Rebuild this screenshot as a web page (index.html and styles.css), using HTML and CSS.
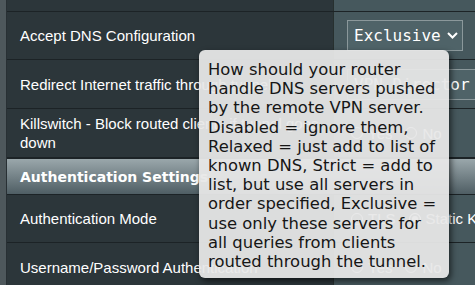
FILE: index.html
```html
<!DOCTYPE html>
<html lang="en">
<head>
    <meta charset="UTF-8">
    <title>VPN Client Settings</title>
    <link rel="stylesheet" href="styles.css">
</head>
<body>
    <div class="page">
        <div class="side"></div>
        <div class="table">
            <div class="row row-top">
                <div class="label"></div>
                <div class="value"></div>
            </div>

            <div class="row row-47">
                <div class="label">Accept DNS Configuration</div>
                <div class="value">
                    <div class="select">
                        <span>Exclusive</span>
                        <svg class="chevron" width="11" height="7" viewBox="0 0 11 7"><polyline points="1,1 5.5,5.5 10,1" fill="none" stroke="#fff" stroke-width="2"/></svg>
                    </div>
                </div>
            </div>

            <div class="row">
                <div class="label">Redirect Internet traffic through tunnel</div>
                <div class="value">
                    <div class="select select-wide">
                        <span>VPN Director</span>
                        <svg class="chevron" width="11" height="7" viewBox="0 0 11 7"><polyline points="1,1 5.5,5.5 10,1" fill="none" stroke="#fff" stroke-width="2"/></svg>
                    </div>
                </div>
            </div>

            <div class="row">
                <div class="label label-wrap">Killswitch - Block routed clients if tunnel goes down</div>
                <div class="value">
                    <span class="radio"></span><span class="opt">Yes</span>
                    <span class="radio"></span><span class="opt">No</span>
                </div>
            </div>

            <div class="head">Authentication Settings</div>

            <div class="row row-47">
                <div class="label">Authentication Mode</div>
                <div class="value">
                    <span class="radio"></span><span class="opt">TLS</span>
                    <span class="radio checked"></span><span class="opt">Static Key</span>
                </div>
            </div>

            <div class="row">
                <div class="label">Username/Password Authentication</div>
                <div class="value">
                    <span class="radio"></span><span class="opt">Yes</span>
                    <span class="radio"></span><span class="opt">No</span>
                </div>
            </div>
        </div>

        <div class="tooltip">How should your router handle DNS servers pushed by the remote VPN server. Disabled = ignore them, Relaxed = just add to list of known DNS, Strict = add to list, but use all servers in order specified, Exclusive = use only these servers for all queries from clients routed through the tunnel.</div>
    </div>
</body>
</html>
```

FILE: styles.css
```css
body {
    margin: 0;
    background-color: #2c363a;
    font-family: 'Liberation Sans', Arial, sans-serif;
    color: #fff;
    overflow: hidden;
}
.page {
    position: relative;
    display: flex;
    width: 475px;
    height: 285px;
    overflow: hidden;
}
.side {
    width: 7px;
    flex-shrink: 0;
    background-color: #4e585c;
    border-right: 1px solid #283034;
    box-sizing: border-box;
}
.table {
    flex-shrink: 0;
    width: 600px;
}
.row {
    display: grid;
    grid-template-columns: 326px 1fr;
    height: 48px;
    border-top: 1px solid #1c2326;
}
.row-top {
    height: 11px;
    border-top: none;
}
.row-47 {
    height: 47px;
}
.label {
    display: flex;
    align-items: center;
    padding-left: 13px;
    background-color: #2c363a;
    font-size: 15px;
    white-space: nowrap;
}
.label-wrap {
    white-space: normal;
    line-height: 19px;
    width: 300px;
}
.value {
    display: flex;
    align-items: center;
    padding-left: 13px;
    background-color: #46585d;
    border-left: 1px solid #27302f;
    font-size: 15px;
}
.select {
    display: flex;
    align-items: center;
    box-sizing: border-box;
    width: 116px;
    height: 31px;
    padding-left: 6px;
    background-color: #4f6368;
    border: 1px solid #8b989b;
    font-family: 'DejaVu Sans Mono', monospace;
    font-size: 16px;
    color: #fff;
}
.select-wide {
    width: 150px;
}
.chevron {
    margin-left: 6px;
}
.radio {
    width: 10px;
    height: 10px;
    border: 1.5px solid #fff;
    border-radius: 50%;
    margin-left: 4px;
    margin-right: 5px;
}
.radio.checked {
    background-color: #fff;
    box-shadow: inset 0 0 0 2px #46585d;
}
.opt {
    margin-right: 9px;
}
.head {
    height: 35px;
    border-top: 2px solid #1c2326;
    border-bottom: 1px solid #1c2326;
    display: flex;
    align-items: center;
    padding-left: 13px;
    background: linear-gradient(#9aa7ab, #4f5e64);
    font-family: 'DejaVu Sans', Verdana, sans-serif;
    font-weight: bold;
    font-size: 14px;
}
.head + .row {
    border-top: none;
}
.tooltip {
    position: absolute;
    left: 199px;
    top: 50px;
    width: 232px;
    padding: 10px 9px 7px 9px;
    background-color: rgba(232, 232, 232, 0.94);
    border-radius: 6px;
    box-shadow: 2px 3px 6px rgba(0, 0, 0, 0.6);
    font-family: 'DejaVu Sans', Verdana, sans-serif;
    font-size: 16.4px;
    line-height: 19.2px;
    color: #161616;
}
```
